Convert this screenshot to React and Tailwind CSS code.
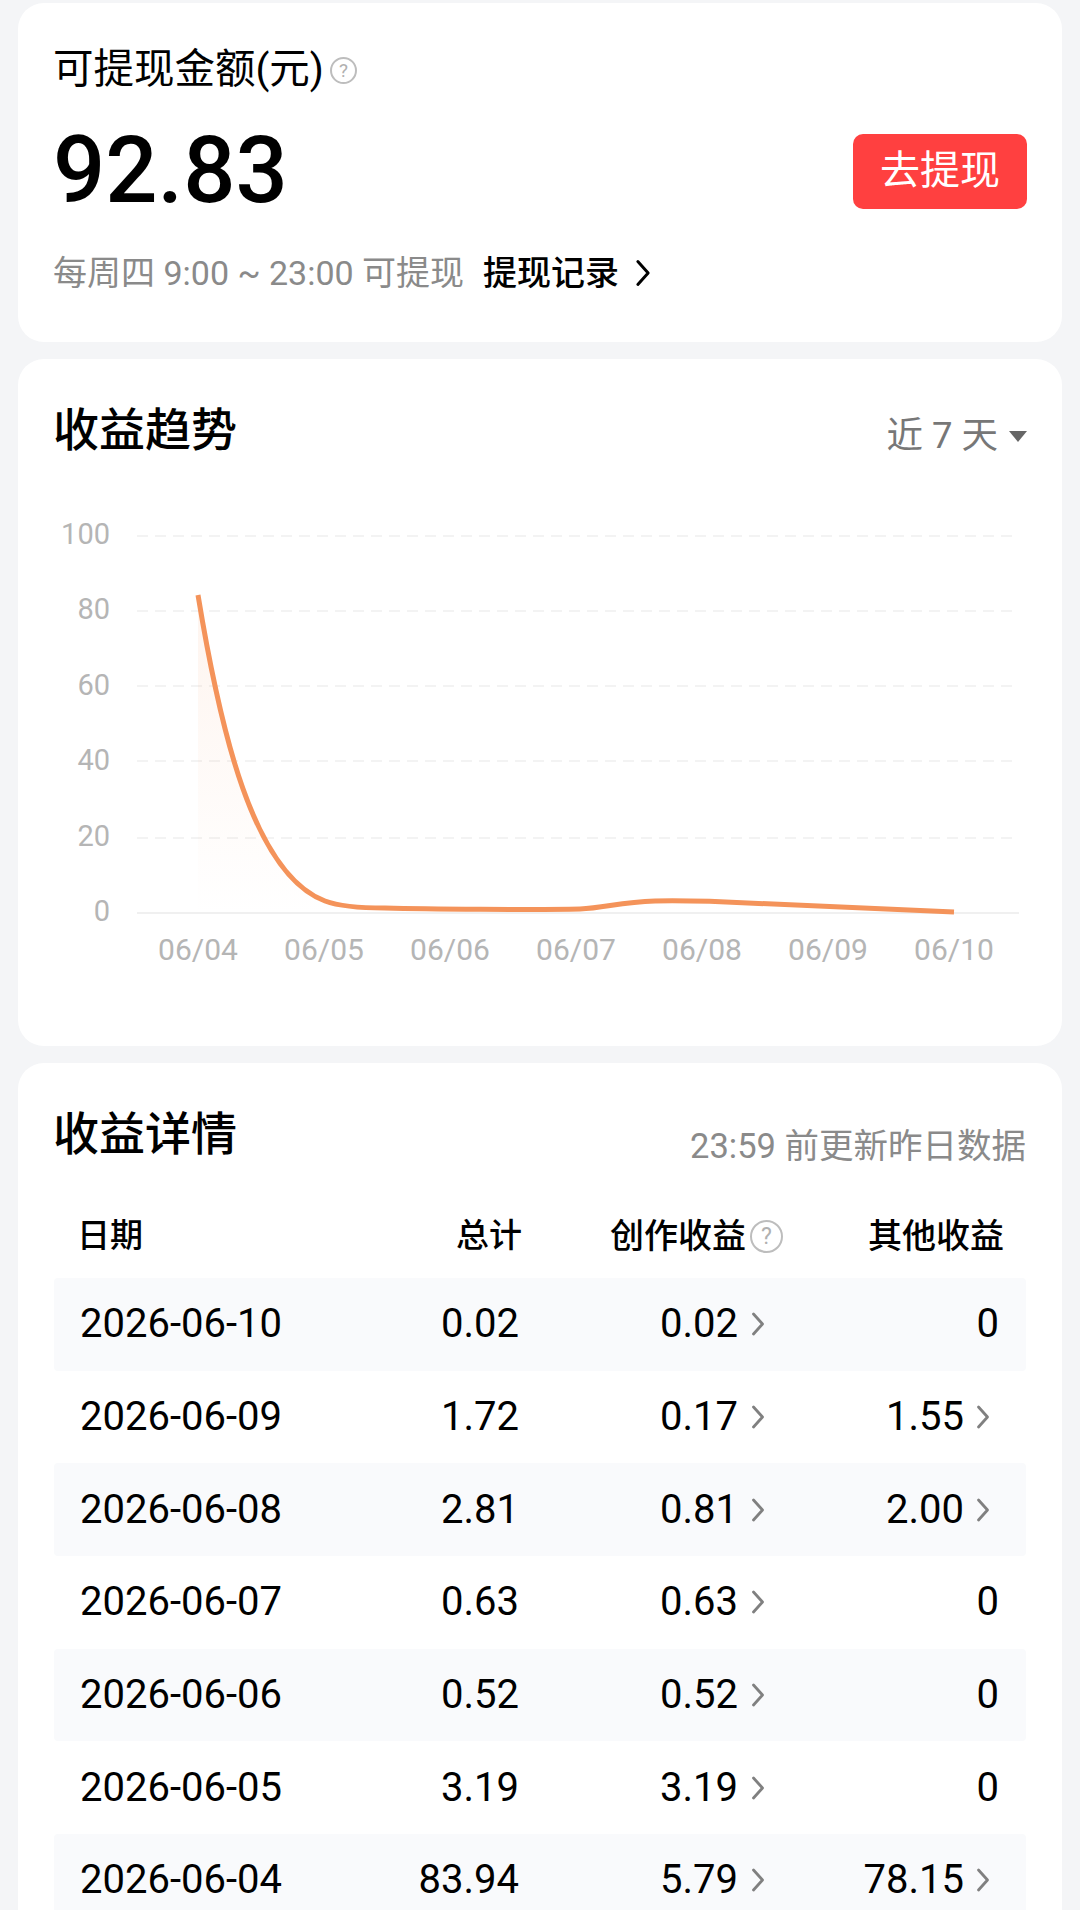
const rows = [
  ["2026-06-10", "0.02", "0.02", "0", false],
  ["2026-06-09", "1.72", "0.17", "1.55", true],
  ["2026-06-08", "2.81", "0.81", "2.00", true],
  ["2026-06-07", "0.63", "0.63", "0", false],
  ["2026-06-06", "0.52", "0.52", "0", false],
  ["2026-06-05", "3.19", "3.19", "0", false],
  ["2026-06-04", "83.94", "5.79", "78.15", true],
];

const yLabels = ["100", "80", "60", "40", "20", "0"];
const xLabels = ["06/04", "06/05", "06/06", "06/07", "06/08", "06/09", "06/10"];

// x = page x - 135, y = page y - 530
const curve =
  "M63 66 C85 200 118 345 190 372 C205 377.6 230 379 250 379 C290 380 400 381 445 380 C470 379 485 373 520 372 C545 371.5 560 372 580 372.5 C650 375 720 378 819 383";
const area = curve + " L819 386 L63 386 Z";

function Chevron({ className, width = 2.6 }) {
  return (
    <svg viewBox="0 0 14 24" fill="none" className={className}>
      <path d="M2.5 2 L11.5 12 L2.5 22" stroke="currentColor" strokeWidth={width} strokeLinecap="round" strokeLinejoin="round" />
    </svg>
  );
}

function Help({ className }) {
  return (
    <span className={"flex items-center justify-center rounded-full border-2 border-[#bdbdbd] text-[#b0b0b0] " + className}>?</span>
  );
}

function Value({ value, arrow, className }) {
  return (
    <div className={"flex items-center justify-end " + className}>
      <span>{value}</span>
      {arrow && <Chevron className="w-[14px] h-[26px] text-[#808080]" width={2.8} />}
    </div>
  );
}

export default function App() {
  return (
    <div className="h-[1910px] overflow-hidden bg-[#f4f5f7] pt-[3px] px-[18px] font-['Roboto','Noto_Sans_CJK_SC',sans-serif] text-black">
      {/* Balance */}
      <section className="h-[339px] rounded-[26px] bg-white px-[35px] pt-[42px]">
        <div className="flex items-center h-[48px] text-[40.5px] leading-[48px]">
          <span>可提现金额(元)</span>
          <Help className="ml-[6px] mt-[2px] w-[27px] h-[27px] text-[19px] leading-none" />
        </div>
        <div className="mt-[33px] flex items-center justify-between h-[90px]">
          <span className="text-[92px] leading-[90px] font-medium">92.83</span>
          <button className="w-[174px] h-[75px] rounded-[10px] bg-[#ff4040] text-white text-[40px]">去提现</button>
        </div>
        <div className="mt-[35px] flex items-center h-[44px] text-[34px] leading-[44px]">
          <span className="text-[#8a8a8a]">每周四 9:00 ~ 23:00 可提现</span>
          <span className="ml-[19px] font-medium">提现记录</span>
          <Chevron className="ml-[16px] w-[16px] h-[28px]" width={2.6} />
        </div>
      </section>

      {/* Trend */}
      <section className="mt-[17px] h-[687px] rounded-[26px] bg-white px-[35px] pt-[45px]">
        <div className="flex justify-between h-[52px]">
          <h2 className="text-[46px] leading-[52px] font-medium">收益趋势</h2>
          <div className="flex items-center mt-[10px] h-[44px] text-[36.5px] text-[#777]">
            <span>近 7 天</span>
            <span className="ml-[11px] w-0 h-0 border-x-[9px] border-t-[11px] border-x-transparent border-t-[#666]" />
          </div>
        </div>
        <div className="mt-[41px] flex">
          <div className="w-[57px] shrink-0 text-[29px] text-[#b5b5b5]">
            {yLabels.map((l) => (
              <div key={l} className="h-[75.4px] flex items-center justify-end">{l}</div>
            ))}
          </div>
          <div className="ml-[25px] w-[885px] shrink-0">
            <svg viewBox="0 0 885 386" className="mt-[31.7px] w-[885px] h-[386px] block">
              <defs>
                <linearGradient id="fade" x1="0" y1="0" x2="0" y2="1">
                  <stop offset="0" stopColor="#f4935a" stopOpacity="0.1" />
                  <stop offset="1" stopColor="#f4935a" stopOpacity="0" />
                </linearGradient>
              </defs>
              {[7, 82, 157, 232, 309].map((y) => (
                <line key={y} x1="2" x2="884" y1={y} y2={y} stroke="#f3f3f3" strokeWidth="2" strokeDasharray="11 7" />
              ))}
              <line x1="2" x2="884" y1="384" y2="384" stroke="#f0f0f0" strokeWidth="2" />
              <path d={area} fill="url(#fade)" />
              <path d={curve} fill="none" stroke="#f4935a" strokeWidth="5" />
            </svg>
            <div className="grid grid-cols-7 w-[882px] h-[40px] mt-[15px] text-[30px] leading-[40px] text-[#b5b5b5] text-center">
              {xLabels.map((l) => (
                <span key={l}>{l}</span>
              ))}
            </div>
          </div>
        </div>
      </section>

      {/* Details */}
      <section className="mt-[17px] rounded-t-[26px] bg-white px-[36px] pt-[45px] pb-[40px]">
        <div className="flex justify-between h-[52px]">
          <h2 className="-ml-[1px] text-[46px] leading-[52px] font-medium">收益详情</h2>
          <span className="mt-[16px] h-[44px] text-[34.5px] leading-[44px] text-[#8a8a8a]">23:59 前更新昨日数据</span>
        </div>
        <div className="mt-[41px] grid grid-cols-[246px_222px_247px_257px] items-center h-[70px] text-[33px] font-medium">
          <span className="pl-[23px]">日期</span>
          <span className="text-right">总计</span>
          <div className="flex items-center justify-end -mr-[14px]">
            <span className="text-[34px]">创作收益</span>
            <Help className="ml-[4px] w-[33px] h-[33px] text-[23px] leading-none font-normal" />
          </div>
          <span className="pr-[22px] text-right text-[34px]">其他收益</span>
        </div>
        <div className="mt-[7px] text-[40px] leading-[48px]">
          {rows.map((r, i) => (
            <div
              key={r[0]}
              className={
                "grid grid-cols-[246px_222px_247px_257px] items-center h-[92.7px] rounded-[4px] " +
                (i % 2 === 0 ? "bg-[#f9fafc]" : "bg-white")
              }
            >
              <span className="pl-[26px]">{r[0]}</span>
              <span className="pr-[3px] text-right">{r[1]}</span>
              <div className="pr-[4px]">
                <Value value={r[2]} arrow className="gap-[13px]" />
              </div>
              <div className={r[4] ? "pr-[36px]" : "pr-[27px]"}>
                <Value value={r[3]} arrow={r[4]} className="gap-[12px]" />
              </div>
            </div>
          ))}
        </div>
      </section>
    </div>
  );
}
